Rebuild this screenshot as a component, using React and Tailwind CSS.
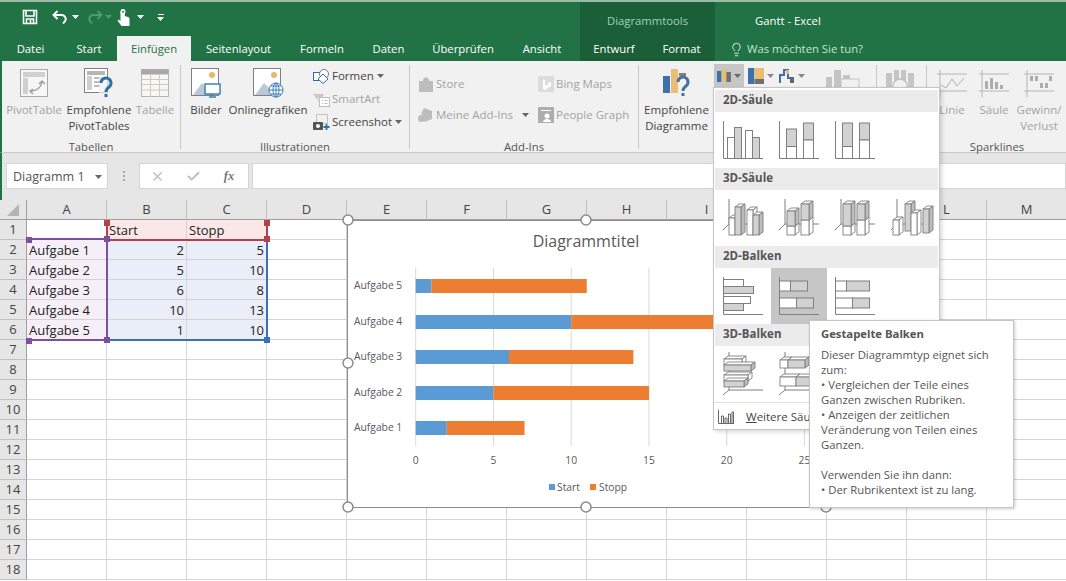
import React from 'react';
import { Lightbulb, Check, X } from 'lucide-react';

const font = { fontFamily: '"Open Sans", "Liberation Sans", sans-serif' };

const Caret = ({ className = 'text-[#666]' }) => (
  <svg width="7" height="4" viewBox="0 0 7 4" className={`shrink-0 ${className}`}>
    <path d="M0 0h7L3.5 4z" fill="currentColor" />
  </svg>
);

function SaveIcon() {
  return (
    <svg width="16" height="16" viewBox="0 0 16 16" fill="none" stroke="white" strokeWidth="1.6">
      <path d="M1.5 1.5h13v13h-13z" />
      <path d="M4 2v5h8V2" />
      <path d="M4.5 15v-5h7v5" />
      <path d="M8.5 11v3" />
    </svg>
  );
}

function UndoIcon() {
  return (
    <svg width="16" height="14" viewBox="0 0 16 14" fill="none" stroke="white" strokeWidth="1.9">
      <path d="M5.5 1 1.5 5l4 4" />
      <path d="M2 5h7.5a4 4 0 0 1 3 6.8L11 13.5" />
    </svg>
  );
}

function RedoIcon() {
  return (
    <svg width="16" height="14" viewBox="0 0 16 14" fill="none" stroke="#4f9a70" strokeWidth="1.9">
      <path d="M10.5 1l4 4-4 4" />
      <path d="M14 5H6.5a4 4 0 0 0-3 6.8L5 13.5" />
    </svg>
  );
}

function TouchIcon() {
  return (
    <svg width="13" height="17" viewBox="0 0 13 17" fill="white">
      <path d="M3.5 2.5a2.5 2.5 0 0 1 5 0c0 1-.3 1.600-.7 2.200V7l3.200 1c1.200.4 1.500 1.200 1.500 2.200V17H4.500L.5 11.500l1-1 2 1.500V5a2.500 2.500 0 0 1 0-2.500z" />
      <circle cx="6" cy="2.800" r="1" fill="#217346" />
    </svg>
  );
}

function PivotIcon() {
  return (
    <svg width="28" height="28" viewBox="0 0 28 28" fill="none">
      <rect x=".5" y=".5" width="27" height="27" fill="#f6f6f6" stroke="#a8a8a8" />
      <rect x="3" y="3" width="22" height="5" fill="#d0d0d0" />
      <rect x="3" y="9" width="5" height="16" fill="#d0d0d0" />
      <path d="M11 22c5 0 10-3 11-9M19 15l3-3 3 3M13 20l-3 2 3 3" stroke="#a0a0a0" strokeWidth="1.500" />
    </svg>
  );
}

function QuestionMark({ color, transform }) {
  return (
    <g transform={transform} fill="none" stroke={color}>
      <path d="M0 5a5 5 0 1 1 8 4c-2 1.500-3 2.500-3 5" strokeWidth="3" />
      <rect x="3.500" y="16" width="3" height="3" fill={color} stroke="none" />
    </g>
  );
}

function RecommendedPivotIcon() {
  return (
    <svg width="30" height="31" viewBox="0 0 30 31" fill="none">
      <rect x=".5" y=".5" width="23" height="24" fill="white" stroke="#808080" />
      <rect x="3" y="3" width="18" height="4" fill="#b5b5b5" />
      <rect x="3" y="8" width="5" height="14" fill="#cfcfcf" />
      <path d="M10 10h10M10 14h7M10 18h6" stroke="#bdbdbd" strokeWidth="2" />
      <rect x="15" y="9" width="15" height="22" fill="#f1f1f1" opacity=".7" />
      <QuestionMark color="#2f6fa8" transform="translate(17 10)" />
    </svg>
  );
}

function TableIcon() {
  return (
    <svg width="28" height="28" viewBox="0 0 28 28" fill="none">
      <rect x=".5" y=".5" width="27" height="27" fill="#f7f7f7" stroke="#b5b5b5" />
      <rect x=".5" y=".5" width="27" height="5" fill="#a8a8a8" />
      <path d="M.5 10.500h27M.5 15.500h27M.5 21h27M9.500 5v23M18.500 5v23" stroke="#cfcabc" />
    </svg>
  );
}

function PictureIcon({ overlay }) {
  return (
    <svg width="31" height="30" viewBox="0 0 31 30" fill="none">
      <rect x=".5" y=".5" width="27" height="27" fill="white" stroke="#808080" />
      <circle cx="21" cy="7" r="3" fill="#e8b966" />
      <path d="M2 27l9-12 7 7 4 5z" fill="#b8c9da" />
      {overlay === 'screen' ? (
        <g>
          <rect x="14" y="16" width="15" height="10" fill="white" stroke="#3f7fb8" strokeWidth="1.500" />
          <path d="M21.500 26v2M18 29h7" stroke="#3f7fb8" strokeWidth="1.500" />
        </g>
      ) : (
        <g stroke="#3f7fb8" fill="white">
          <circle cx="23" cy="22" r="7" />
          <path d="M16 22h14M23 15v14M18 18h10M18 26h10" fill="none" />
          <ellipse cx="23" cy="22" rx="3" ry="7" fill="none" />
        </g>
      )}
    </svg>
  );
}

function ShapesIcon() {
  return (
    <svg width="17" height="15" viewBox="0 0 17 15" fill="none" stroke="#2f6fa8">
      <rect x=".5" y="3.500" width="8" height="8" fill="white" />
      <circle cx="11" cy="5" r="4.500" fill="white" stroke="#777" />
      <path d="M10 5l5 5-5 4.500L5 10z" fill="white" />
    </svg>
  );
}

function SmartArtIcon() {
  return (
    <svg width="17" height="15" viewBox="0 0 17 15" fill="none">
      <path d="M0 2h11l-2 4H3z" fill="#c9c9c9" />
      <path d="M3 6l3 3" stroke="#c0c0c0" />
      <rect x="6.500" y="5.500" width="10" height="9" fill="white" stroke="#bdbdbd" />
      <path d="M9 8.500h1M11.500 8.500h3M9 11.500h1M11.500 11.500h3" stroke="#bdbdbd" />
    </svg>
  );
}

function ScreenshotIcon() {
  return (
    <svg width="17" height="16" viewBox="0 0 17 16" fill="none">
      <rect x="3.500" y=".5" width="11" height="9" stroke="#999" strokeDasharray="1 1" />
      <rect x="0" y="8" width="10" height="8" rx="1" fill="#555" />
      <circle cx="5" cy="12" r="2" fill="white" />
      <path d="M13.500 10v6M10.500 13h6" stroke="#2f6fa8" strokeWidth="1.800" />
    </svg>
  );
}

const GrayGlyph = ({ children }) => (
  <svg width="16" height="16" viewBox="0 0 16 16" fill="#bdbdbd">{children}</svg>
);

const ColumnIcon = () => (
  <svg width="14" height="13" viewBox="0 0 14 13">
    <rect x="0" y="2" width="4.500" height="11" fill="#3f70ad" />
    <rect x="4.700" y="0" width="4.500" height="13" fill="#e9bd73" />
    <rect x="9.400" y="3" width="4.500" height="10" fill="#707070" />
  </svg>
);

const HierarchyIcon = () => (
  <svg width="16" height="16" viewBox="0 0 16 16">
    <rect x="0" y="0" width="6.300" height="16" fill="#3f70ad" />
    <rect x="6.500" y="0" width="9.500" height="11" fill="#e9bd73" />
    <rect x="6.500" y="11" width="9.500" height="5" fill="#707070" />
  </svg>
);

const WaterfallIcon = () => (
  <svg width="16" height="14" viewBox="0 0 16 14" fill="none">
    <path d="M1 14V6h4V1h4v8h5v5" stroke="#3f70ad" strokeWidth="2" />
    <path d="M7 1h3v4H7z" fill="#e9bd73" />
    <rect x="11" y="8" width="4" height="6" fill="#666" />
  </svg>
);

function SparkFrame({ children }) {
  return (
    <svg width="30" height="27" viewBox="0 0 30 27" fill="none">
      <path d="M3 0v27M0 4h30M0 21h30" stroke="#b5b5b5" />
      {children}
    </svg>
  );
}

function BigBtn({ icon, lines, gray = false, w }) {
  return (
    <div className={`${w} h-full shrink-0 flex flex-col items-center pt-[8px] ${gray ? 'text-[#a3a3a3]' : 'text-[#444]'}`}>
      <div className="h-[28px] flex items-center justify-center">{icon}</div>
      <div className="mt-[5px] leading-[16px] text-center whitespace-nowrap">
        {lines.map((l) => (
          <div key={l}>{l}</div>
        ))}
      </div>
    </div>
  );
}

function SmallBtn({ icon, label, gray = false, caret = false, caretGap = 'ml-[3px]' }) {
  return (
    <div className={`flex items-center whitespace-nowrap ${gray ? 'text-[#a3a3a3]' : 'text-[#444]'}`}>
      <div className="w-[17px] mr-[2px] flex justify-center">{icon}</div>
      <span>{label}</span>
      {caret && <div className={caretGap}><Caret /></div>}
    </div>
  );
}

function Group({ w, label, children }) {
  return (
    <>
      <div className={`${w} shrink-0 flex flex-col`}>
        <div className="h-[76px] shrink-0 flex">{children}</div>
        <div className="h-[14px] shrink-0 mt-[2px] leading-[16px] text-center text-[#555] text-[11.3px]">{label}</div>
      </div>
      <div className="w-px h-[84px] mt-[4px] bg-[#c8c8c8] shrink-0" />
    </>
  );
}

function Tab({ w, label, active }) {
  return (
    <div className={`${w} shrink-0 h-full flex items-center justify-center pt-[2px] ${active ? 'bg-[#f1f1f1] text-[#217346]' : 'text-white'}`}>
      {label}
    </div>
  );
}

function TitleBar() {
  return (
    <div className="h-[61px] flex bg-[#217346] border-t-2 border-[#9dbba9] text-[11.3px]">
      <div className="w-[580px] shrink-0 flex flex-col">
        <div className="h-[34px] flex items-center pl-[22px] pb-[4px]">
          <SaveIcon />
          <div className="ml-[14px]"><UndoIcon /></div>
          <div className="ml-[4px]"><Caret className="text-white" /></div>
          <div className="ml-[8px]"><RedoIcon /></div>
          <div className="ml-[2px]"><Caret className="text-[#4f9a70]" /></div>
          <div className="ml-[5px]"><TouchIcon /></div>
          <div className="ml-[7px]"><Caret className="text-white" /></div>
          <div className="ml-[13px] flex flex-col items-center gap-[2px]">
            <div className="w-[6px] h-px bg-white" />
            <Caret className="text-white" />
          </div>
        </div>
        <div className="h-[25px] flex">
          <Tab w="w-[61px]" label="Datei" />
          <Tab w="w-[56px]" label="Start" />
          <Tab w="w-[74px]" label="Einfügen" active />
          <Tab w="w-[95px]" label="Seitenlayout" />
          <Tab w="w-[72px]" label="Formeln" />
          <Tab w="w-[61px]" label="Daten" />
          <Tab w="w-[88px]" label="Überprüfen" />
          <Tab w="w-[70px]" label="Ansicht" />
        </div>
      </div>
      <div className="w-[135px] shrink-0 flex flex-col bg-[#1b5f38]">
        <div className="h-[34px] flex items-center justify-center text-[#9fd3b5] pt-[4px]">Diagrammtools</div>
        <div className="h-[25px] flex">
          <Tab w="w-[68px]" label="Entwurf" />
          <Tab w="w-[67px]" label="Format" />
        </div>
      </div>
      <div className="flex-1 flex flex-col">
        <div className="h-[34px] flex items-center pl-[40px] text-white pt-[4px]">Gantt - Excel</div>
        <div className="h-[25px] flex items-center pl-[14px] pt-[2px] gap-[3px] text-[#c5e3d1]">
          <Lightbulb size={15} strokeWidth={1.300} color="white" />
          <span>Was möchten Sie tun?</span>
        </div>
      </div>
    </div>
  );
}

function Ribbon() {
  return (
    <div className="h-[92px] flex bg-[#f1f1f1] border-l-2 border-b border-l-[#217346] border-b-[#c9c9c9] text-[11.5px]">
      <Group w="w-[178px]" label="Tabellen">
        <BigBtn w="w-[64px]" gray icon={<PivotIcon />} lines={['PivotTable']} />
        <BigBtn w="w-[66px]" icon={<RecommendedPivotIcon />} lines={['Empfohlene', 'PivotTables']} />
        <BigBtn w="w-[46px]" gray icon={<TableIcon />} lines={['Tabelle']} />
      </Group>
      <Group w="w-[228px]" label="Illustrationen">
        <BigBtn w="w-[50px]" icon={<PictureIcon overlay="screen" />} lines={['Bilder']} />
        <BigBtn w="w-[74px]" icon={<PictureIcon overlay="globe" />} lines={['Onlinegrafiken']} />
        <div className="ml-[8px] pt-[7px] flex flex-col gap-[7px] leading-[16px]">
          <SmallBtn icon={<ShapesIcon />} label="Formen" caret />
          <SmallBtn icon={<SmartArtIcon />} label="SmartArt" gray />
          <SmallBtn icon={<ScreenshotIcon />} label="Screenshot" caret />
        </div>
      </Group>
      <Group w="w-[228px]" label="Add-Ins">
        <div className="ml-[7px] w-[120px] pt-[15px] flex flex-col gap-[15px] leading-[16px]">
          <SmallBtn
            gray
            label="Store"
            icon={<GrayGlyph><path d="M1 5h14v11H1zM5 5c0-5 6-5 6 0" /></GrayGlyph>}
          />
          <SmallBtn
            gray
            label="Meine Add-Ins"
            caret
            caretGap="ml-[9px]"
            icon={<GrayGlyph><path d="M6 1l8 3v8l-7 3-2-2V8L3 7z" /><circle cx="3.500" cy="11.500" r="3.500" /></GrayGlyph>}
          />
        </div>
        <div className="pt-[15px] flex flex-col gap-[15px] leading-[16px]">
          <SmallBtn
            gray
            label="Bing Maps"
            icon={<GrayGlyph><rect width="16" height="16" fill="#dcdcdc" /><path d="M5 3l2 1v6l4-2-2-1 4-1v4l-6 4-2-1z" fill="white" /></GrayGlyph>}
          />
          <SmallBtn
            gray
            label="People Graph"
            icon={<GrayGlyph><rect width="16" height="16" fill="#adadad" /><circle cx="9" cy="9" r="2.500" fill="white" /><path d="M5 15c0-4 8-4 8 0zM3 3h10v1H3z" fill="white" /></GrayGlyph>}
          />
        </div>
      </Group>
      <Group w="w-[237px]" label="Diagramme">
        <BigBtn
          w="w-[75px]"
          icon={
            <svg width="30" height="30" viewBox="0 0 30 30" fill="none">
              <rect x="1" y="8" width="7" height="17" fill="#3f70ad" />
              <rect x="9" y="1" width="7" height="24" fill="#e9bd73" />
              <rect x="17" y="5" width="7" height="3" fill="#808080" />
              <QuestionMark color="#48719c" transform="translate(16 9)" />
            </svg>
          }
          lines={['Empfohlene', 'Diagramme']}
        />
        <div className="w-[30px] h-[23px] mt-[3px] bg-[#c6c6c6] flex items-center justify-center gap-[3px]">
          <ColumnIcon />
          <Caret />
        </div>
        <div className="ml-[4px] mt-[3px] h-[23px] flex items-center gap-[3px]">
          <HierarchyIcon />
          <Caret className="text-[#888]" />
        </div>
        <div className="ml-[5px] mt-[3px] h-[23px] flex items-center gap-[3px]">
          <WaterfallIcon />
          <Caret className="text-[#888]" />
        </div>
        <div className="ml-[21px] mt-[7px]">
          <svg width="34" height="20" viewBox="0 0 34 20">
            <rect x="0" y="9" width="6" height="11" fill="#c4c4c4" />
            <rect x="8" y="2" width="7" height="18" fill="#c4c4c4" />
            <rect x="17" y="7" width="7" height="13" fill="#c4c4c4" />
            <rect x="15" y="11" width="18" height="9" fill="#f1f1f1" stroke="#c4c4c4" />
          </svg>
        </div>
      </Group>
      <Group w="w-[49px]" label="">
        <div className="ml-[8px] mt-[8px]">
          <svg width="30" height="22" viewBox="0 0 30 22">
            <path d="M1 4h6v18H1zM9 1h5v21H9zM16 1h5v21h-5zM23 4h6v18h-6z" fill="#c6c6c6" />
            <circle cx="15" cy="17" r="7" fill="#f1f1f1" stroke="#c0c0c0" strokeWidth="1.500" />
          </svg>
        </div>
      </Group>
      <div className="flex-1 flex flex-col">
        <div className="h-[76px] shrink-0 flex">
          <BigBtn
            w="w-[50px]"
            gray
            icon={<SparkFrame><path d="M4 15l5 3 6-9 5 7 7-8" stroke="#b0b0b0" /></SparkFrame>}
            lines={['Linie']}
          />
          <BigBtn
            w="w-[34px]"
            gray
            icon={<SparkFrame><path d="M6 11h3v8H6zM11 8h3v11h-3zM16 12h3v7h-3zM21 15h3v4h-3z" fill="#adadad" /></SparkFrame>}
            lines={['Säule']}
          />
          <BigBtn
            w="w-[56px]"
            gray
            icon={<SparkFrame><path d="M6 6h3v5H6zM11 6h3v5h-3zM16 13h3v5h-3zM21 13h3v5h-3zM25 6h3v5h-3z" fill="#adadad" /></SparkFrame>}
            lines={['Gewinn/', 'Verlust']}
          />
        </div>
        <div className="h-[14px] shrink-0 mt-[2px] leading-[16px] text-center text-[#555] text-[11.3px]">Sparklines</div>
      </div>
    </div>
  );
}

function FormulaBar() {
  return (
    <div className="h-[47px] bg-[#e6e6e6] border-l-2 border-[#217346] flex pt-[10px] pl-[4px] text-[12.5px]">
      <div className="w-[102px] h-[26px] bg-white border border-[#d4d4d4] flex items-center justify-between pl-[6px] pr-[5px] pt-[2px] text-[#555] whitespace-nowrap">
        <span>Diagramm 1</span>
        <Caret />
      </div>
      <div className="w-[31px] h-[26px] flex flex-col items-center justify-center gap-[2px]">
        <div className="w-[2px] h-[2px] bg-[#aaa]" />
        <div className="w-[2px] h-[2px] bg-[#aaa]" />
        <div className="w-[2px] h-[2px] bg-[#aaa]" />
      </div>
      <div className="w-[110px] h-[26px] bg-white border border-[#d4d4d4] flex items-center text-[#bdbdbd]">
        <div className="w-[35px] flex justify-center"><X size={15} /></div>
        <div className="w-[37px] flex justify-center"><Check size={15} strokeWidth={3} /></div>
        <div className="w-[34px] flex justify-center text-[#777] italic font-bold">
          <span style={{ fontFamily: '"Liberation Serif", serif' }}>fx</span>
        </div>
      </div>
      <div className="ml-[3px] flex-1 h-[26px] bg-white border border-[#d4d4d4]" />
    </div>
  );
}

const columns = ['A', 'B', 'C', 'D', 'E', 'F', 'G', 'H', 'I', 'J', 'K', 'L', 'M'];
const rows = Array.from({ length: 18 }, (_, i) => i + 1);
const data = {
  1: { B: 'Start', C: 'Stopp' },
  2: { A: 'Aufgabe 1', B: 2, C: 5 },
  3: { A: 'Aufgabe 2', B: 5, C: 10 },
  4: { A: 'Aufgabe 3', B: 6, C: 8 },
  5: { A: 'Aufgabe 4', B: 10, C: 13 },
  6: { A: 'Aufgabe 5', B: 1, C: 10 },
};

function tintFor(col, row) {
  if (row === 1 && (col === 'B' || col === 'C')) return 'bg-[#fbe7e7]';
  if (row >= 2 && row <= 6 && col === 'A') return 'bg-[#f6eff7]';
  if (row >= 2 && row <= 6 && (col === 'B' || col === 'C')) return 'bg-[#e9eef9]';
  return 'bg-white';
}

function Sheet() {
  return (
    <div className="grid grid-cols-[27px_repeat(13,80px)] auto-rows-[20px] text-[13px] text-[#222]">
      <div className="bg-[#e6e6e6] border-r border-b border-[#9f9f9f] flex items-center justify-center">
        <svg width="12" height="12" viewBox="0 0 12 12"><path d="M12 0v12H0z" fill="#b5b5b5" /></svg>
      </div>
      {columns.map((c) => (
        <div key={c} className="bg-[#e6e6e6] border-r border-b border-r-[#c0c0c0] border-b-[#9f9f9f] flex items-center justify-center pt-px text-[#444]">{c}</div>
      ))}
      {rows.map((r) => (
        <React.Fragment key={r}>
          <div className="bg-[#e6e6e6] border-r border-b border-r-[#9f9f9f] border-b-[#c0c0c0] flex items-center justify-center pt-px text-[#444]">{r}</div>
          {columns.map((c) => {
            const v = data[r]?.[c];
            return (
              <div
                key={c}
                className={`border-r border-b border-[#d4d4d4] leading-[20px] px-[2px] whitespace-nowrap ${tintFor(c, r)} ${typeof v === 'number' ? 'text-right' : ''}`}
              >
                {v}
              </div>
            );
          })}
        </React.Fragment>
      ))}
    </div>
  );
}

function Handle({ className }) {
  return <div className={`absolute w-[6px] h-[6px] ${className}`} />;
}

function Selection() {
  return (
    <>
      <div className="absolute left-[27px] top-[238px] w-[81px] h-[103px] border-2 border-l-0 border-[#7d4f9f]" />
      <div className="absolute left-[106px] top-[220px] w-[162px] h-[21px] border-2 border-t-0 border-[#b5404a]" />
      <div className="absolute left-[108px] top-[241px] w-[160px] h-[100px] border-2 border-t-0 border-l-0 border-[#3f6eb8]" />
      <Handle className="left-[104px] top-[236px] bg-[#7d4f9f]" />
      <Handle className="left-[26px] top-[237px] bg-[#7d4f9f] w-[4px] h-[4px]" />
      <Handle className="left-[26px] top-[338px] bg-[#7d4f9f] w-[4px] h-[4px]" />
      <Handle className="left-[104px] top-[337px] bg-[#7d4f9f]" />
      <Handle className="left-[264px] top-[236px] bg-[#b5404a]" />
      <Handle className="left-[104px] top-[220px] bg-[#b5404a] h-[3px]" />
      <Handle className="left-[264px] top-[220px] bg-[#b5404a] h-[3px]" />
      <Handle className="left-[264px] top-[337px] bg-[#3f6eb8]" />
    </>
  );
}

const tasks = [
  { name: 'Aufgabe 5', start: 1, stop: 10, y: 279 },
  { name: 'Aufgabe 4', start: 10, stop: 13, y: 315 },
  { name: 'Aufgabe 3', start: 6, stop: 8, y: 350 },
  { name: 'Aufgabe 2', start: 5, stop: 10, y: 386 },
  { name: 'Aufgabe 1', start: 2, stop: 5, y: 421 },
];

function Chart() {
  const x0 = 415.7 - 347;
  const unit = 15.55;
  const top = 220;
  return (
    <div className="absolute left-[347px] top-[220px]">
      <svg width="482" height="289" viewBox="0 0 482 289" className="overflow-visible" style={font}>
        <rect x=".5" y=".5" width="479" height="287" fill="white" stroke="#8c8c8c" />
        <text x="239" y="27" textAnchor="middle" fontSize="16" fill="#595959">Diagrammtitel</text>
        {[0, 5, 10, 15, 20, 25].map((v) => (
          <g key={v}>
            <line x1={x0 + v * unit} x2={x0 + v * unit} y1={268 - top} y2={446 - top} stroke="#d9d9d9" />
            <text x={x0 + v * unit} y={464 - top} textAnchor="middle" fontSize="10.300" fill="#595959">{v}</text>
          </g>
        ))}
        {tasks.map((t) => (
          <g key={t.name}>
            <text x="7" y={t.y - top + 10} fontSize="10.300" fill="#595959">{t.name}</text>
            <rect x={x0} y={t.y - top} width={t.start * unit} height="14" fill="#5b9bd5" />
            <rect x={x0 + t.start * unit} y={t.y - top} width={t.stop * unit} height="14" fill="#ed7d31" />
          </g>
        ))}
        <rect x="202" y="264" width="6" height="6" fill="#5b9bd5" />
        <text x="210" y="271" fontSize="10.300" fill="#595959">Start</text>
        <rect x="243" y="264" width="6" height="6" fill="#ed7d31" />
        <text x="252" y="271" fontSize="10.300" fill="#595959">Stopp</text>
        {[[1, 0], [239, 0], [479, 0], [1, 143], [1, 287], [239, 287], [479, 287]].map(([cx, cy]) => (
          <circle key={`${cx}-${cy}`} cx={cx} cy={cy} r="5" fill="white" stroke="#8c8c8c" strokeWidth="1.500" />
        ))}
      </svg>
    </div>
  );
}

const thumbStroke = '#7f7f7f';
const G = '#d2d2d2';
const W = 'white';

function Thumb({ children, axis = true }) {
  return (
    <svg width="56" height="56" viewBox="0 0 56 56" fill="white" stroke={thumbStroke}>
      {axis && <path d="M8.500 9v37.500H48" fill="none" />}
      {children}
    </svg>
  );
}

function Box3d({ x, y, w, h, fill }) {
  return (
    <g strokeWidth=".9">
      <path d={`M${x} ${y}l4-3h${w}l-4 3z`} fill="white" />
      <path d={`M${x + w} ${y}l4-3v${h}l-4 3z`} fill={fill === W ? W : '#bdbdbd'} />
      <rect x={x} y={y} width={w} height={h} fill={fill} />
    </g>
  );
}

function Axis3d() {
  return <path d="M14 9v25H48M14 34l-6 6" fill="none" />;
}

function AxisBar3d() {
  return <path d="M14 6v38H48M14 44l-6 5" fill="none" />;
}

const column2d = [
  <Thumb key="0">
    <rect x="12.500" y="25.500" width="7" height="21" fill={W} />
    <rect x="19.500" y="15.500" width="7" height="31" fill={G} />
    <rect x="30.500" y="18.500" width="7" height="28" fill={W} />
    <rect x="37.500" y="25.500" width="7" height="21" fill={G} />
  </Thumb>,
  <Thumb key="1">
    <rect x="15.500" y="17" width="10" height="17.500" fill={G} />
    <rect x="15.500" y="34.500" width="10" height="12" fill={W} />
    <rect x="32.500" y="11" width="10" height="17" fill={G} />
    <rect x="32.500" y="28" width="10" height="18.500" fill={W} />
  </Thumb>,
  <Thumb key="2">
    <rect x="15.500" y="11" width="10" height="23.500" fill={G} />
    <rect x="15.500" y="34.500" width="10" height="12" fill={W} />
    <rect x="32.500" y="11" width="10" height="17" fill={G} />
    <rect x="32.500" y="28" width="10" height="18.500" fill={W} />
  </Thumb>,
];

const column3d = [
  <Thumb key="0" axis={false}>
    <Axis3d />
    <Box3d x={14} y={28} w={6} h={17} fill={W} />
    <Box3d x={20} y={17} w={6} h={28} fill={G} />
    <Box3d x={32} y={20} w={6} h={25} fill={W} />
    <Box3d x={38} y={25} w={6} h={20} fill={G} />
  </Thumb>,
  <Thumb key="1" axis={false}>
    <Axis3d />
    <Box3d x={16} y={36} w={8} h={9} fill={W} />
    <Box3d x={16} y={21} w={8} h={15} fill={G} />
    <Box3d x={30} y={30} w={8} h={15} fill={W} />
    <Box3d x={30} y={14} w={8} h={16} fill={G} />
  </Thumb>,
  <Thumb key="2" axis={false}>
    <Axis3d />
    <Box3d x={16} y={36} w={8} h={9} fill={W} />
    <Box3d x={16} y={14} w={8} h={22} fill={G} />
    <Box3d x={30} y={30} w={8} h={15} fill={W} />
    <Box3d x={30} y={14} w={8} h={16} fill={G} />
  </Thumb>,
  <Thumb key="3" axis={false}>
    <Axis3d />
    <Box3d x={22} y={14} w={6} h={27} fill={G} />
    <Box3d x={40} y={19} w={6} h={24} fill={G} />
    <Box3d x={10} y={30} w={6} h={15} fill={W} />
    <Box3d x={28} y={23} w={6} h={22} fill={W} />
  </Thumb>,
];

const bar2d = [
  <Thumb key="0">
    <rect x="8.500" y="11.500" width="20" height="7" fill={W} />
    <rect x="8.500" y="18.500" width="30" height="7" fill={G} />
    <rect x="8.500" y="28.500" width="27" height="7" fill={W} />
    <rect x="8.500" y="35.500" width="20" height="7" fill={G} />
  </Thumb>,
  <Thumb key="1">
    <rect x="8.500" y="13" width="11" height="10" fill={W} />
    <rect x="19.500" y="13" width="17" height="10" fill={G} />
    <rect x="8.500" y="30" width="17" height="10" fill={W} />
    <rect x="25.500" y="30" width="17" height="10" fill={G} />
  </Thumb>,
  <Thumb key="2">
    <rect x="8.500" y="13" width="11" height="10" fill={W} />
    <rect x="19.500" y="13" width="23" height="10" fill={G} />
    <rect x="8.500" y="30" width="17" height="10" fill={W} />
    <rect x="25.500" y="30" width="17" height="10" fill={G} />
  </Thumb>,
];

const bar3d = [
  <Thumb key="0" axis={false}>
    <AxisBar3d />
    <Box3d x={9} y={13} w={18} h={6} fill={W} />
    <Box3d x={9} y={19} w={27} h={6} fill={G} />
    <Box3d x={9} y={29} w={24} h={6} fill={W} />
    <Box3d x={9} y={35} w={20} h={6} fill={G} />
  </Thumb>,
  <Thumb key="1" axis={false}>
    <AxisBar3d />
    <Box3d x={9} y={14} w={8} h={8} fill={W} />
    <Box3d x={17} y={14} w={17} h={8} fill={G} />
    <Box3d x={9} y={31} w={16} h={9} fill={W} />
    <Box3d x={25} y={31} w={16} h={9} fill={G} />
  </Thumb>,
  <Thumb key="2" axis={false}>
    <AxisBar3d />
    <Box3d x={9} y={14} w={8} h={8} fill={W} />
    <Box3d x={17} y={14} w={22} h={8} fill={G} />
  </Thumb>,
];

function MenuHeader({ label }) {
  return (
    <div className="h-[22px] mx-[1px] bg-[#ebebeb] flex items-center pl-[8px] pb-[2px] font-bold text-[#555] text-[11.5px]">{label}</div>
  );
}

function ThumbRow({ items, hovered }) {
  return (
    <div className="h-[56px] flex ml-[1px]">
      {items.map((t, i) => (
        <div key={i} className={`w-[56px] h-[56px] ${hovered === i ? 'bg-[#c6c6c6]' : ''}`}>{t}</div>
      ))}
    </div>
  );
}

function ChartMenu() {
  return (
    <div className="absolute left-[713px] top-[87px] w-[227px] h-[343px] bg-white border border-[#c6c6c6] shadow-[2px_2px_4px_rgba(0,0,0,0.15)] pt-[2px]">
      <MenuHeader label="2D-Säule" />
      <ThumbRow items={column2d} />
      <MenuHeader label="3D-Säule" />
      <ThumbRow items={column3d} />
      <MenuHeader label="2D-Balken" />
      <ThumbRow items={bar2d} hovered={1} />
      <MenuHeader label="3D-Balken" />
      <ThumbRow items={bar3d} />
      <div className="border-t border-[#e1e1e1] h-[28px] flex items-center pl-[4px] gap-[12px] text-[11.5px] text-[#444]">
        <svg width="16" height="14" viewBox="0 0 16 14" fill="none" stroke="#666">
          <path d="M.5 0v13.500H16M3.500 13V6h2v7M7 13V8h2v5M10.500 13V4h2v9M14 13V2h1.500v11" />
        </svg>
        <span className="whitespace-nowrap"><span className="underline">W</span>eitere Säulendiagramme...</span>
      </div>
    </div>
  );
}

function Tooltip() {
  return (
    <div className="absolute left-[809px] top-[320px] w-[205px] h-[188px] bg-white border border-[#c6c6c6] shadow-[1px_1px_3px_rgba(0,0,0,0.2)] pl-[11px] pt-[5px] text-[11.3px] leading-[15px] text-[#555] whitespace-nowrap">
      <div className="font-bold mb-[6px]">Gestapelte Balken</div>
      <div>Dieser Diagrammtyp eignet sich</div>
      <div>zum:</div>
      <div>• Vergleichen der Teile eines</div>
      <div>Ganzen zwischen Rubriken.</div>
      <div>• Anzeigen der zeitlichen</div>
      <div>Veränderung von Teilen eines</div>
      <div>Ganzen.</div>
      <div className="h-[15px]" />
      <div>Verwenden Sie ihn dann:</div>
      <div>• Der Rubrikentext ist zu lang.</div>
    </div>
  );
}

export default function App() {
  return (
    <div className="relative w-[1066px] h-[581px] overflow-hidden bg-white text-[12px]" style={font}>
      <TitleBar />
      <Ribbon />
      <FormulaBar />
      <Sheet />
      <Selection />
      <Chart />
      <ChartMenu />
      <Tooltip />
    </div>
  );
}
